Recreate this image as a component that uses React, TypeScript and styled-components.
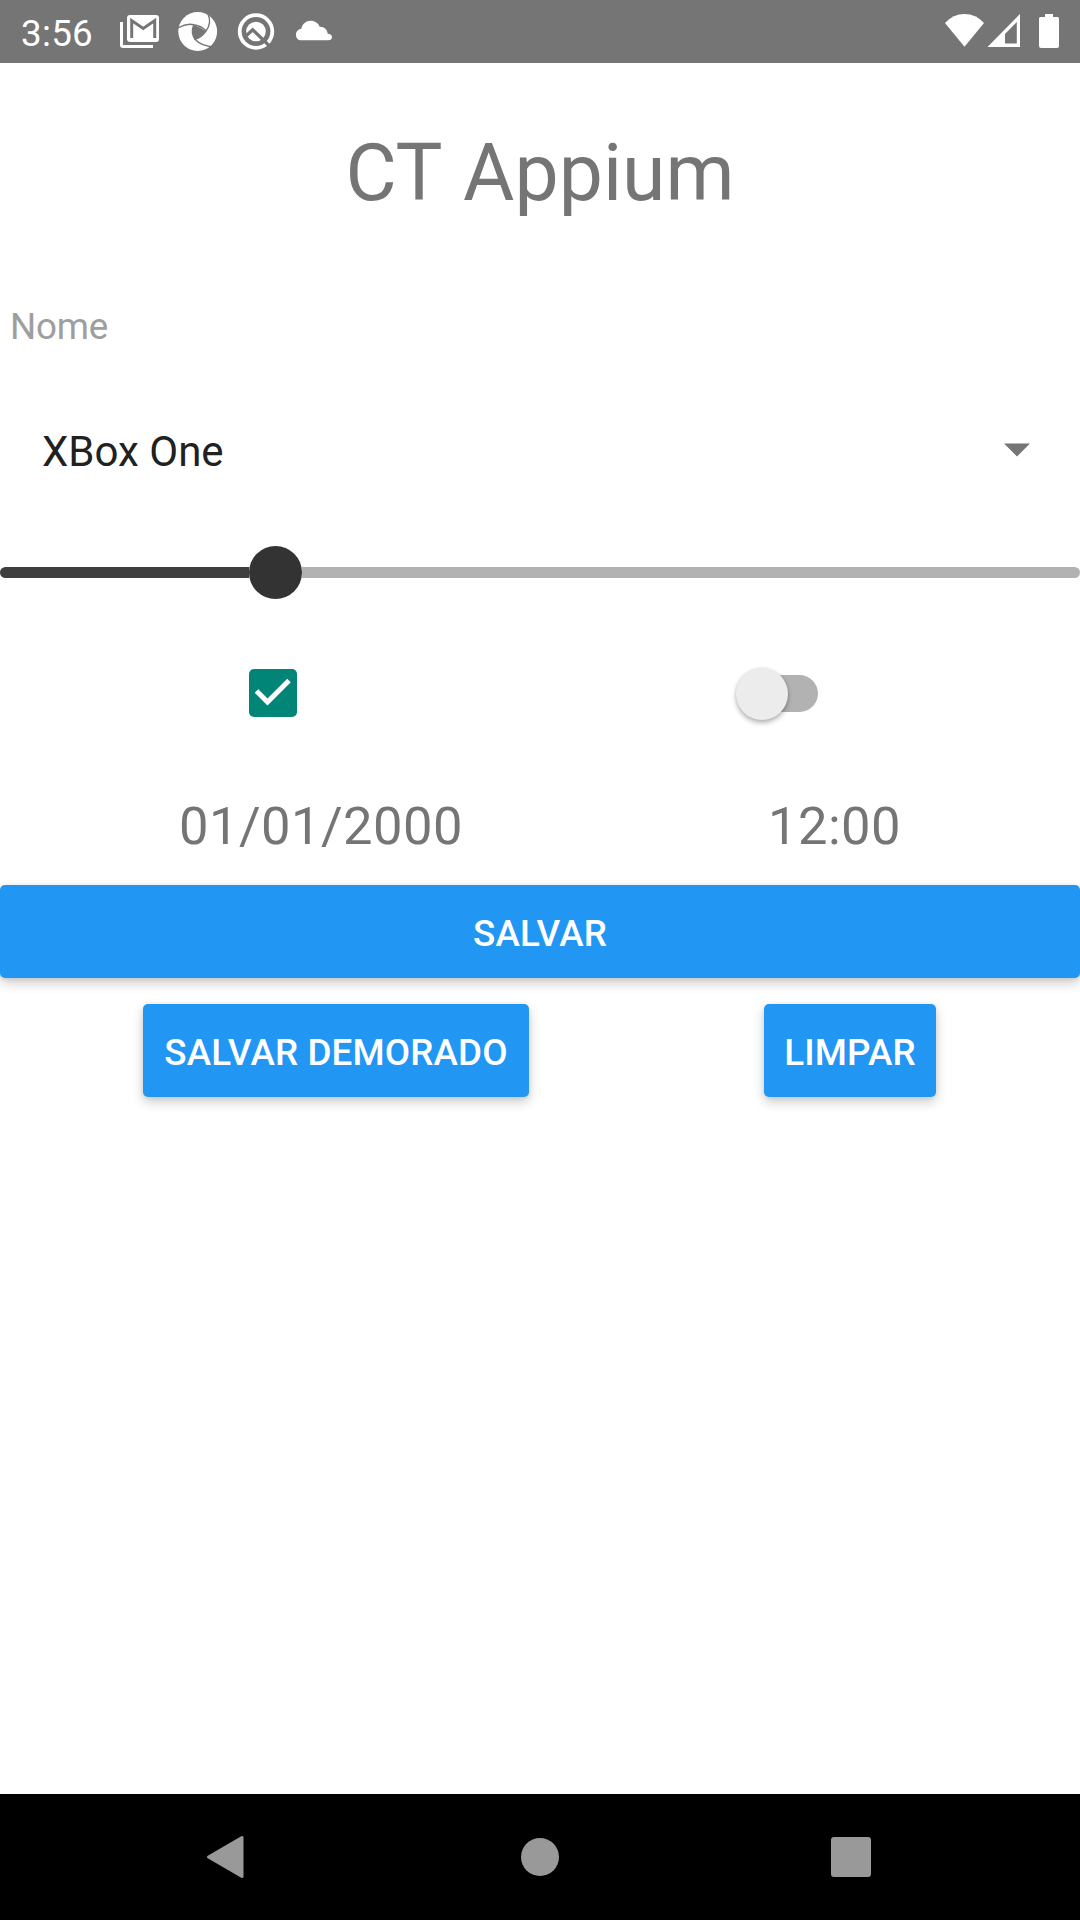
import React, { useState } from "react";
import styled, { createGlobalStyle } from "styled-components";

const GlobalStyle = createGlobalStyle`
  * { box-sizing: border-box; }
  body { margin: 0; background: #fff; font-family: Roboto, "Liberation Sans", sans-serif; }
`;

const Screen = styled.div`
  width: 1080px;
  height: 1920px;
  display: flex;
  flex-direction: column;
  background: #fff;
  overflow: hidden;
`;

const StatusBar = styled.header`
  height: 63px;
  flex: none;
  display: flex;
  align-items: flex-start;
  justify-content: space-between;
  padding: 12px 18px 0 21px;
  background: #757575;
  color: #fff;
`;

const StatusGroup = styled.div<{ $gap: number }>`
  display: flex;
  align-items: flex-start;
  gap: ${(p) => p.$gap}px;
`;

const Clock = styled.span`
  width: 79px;
  font-size: 36.75px;
  line-height: 44px;
  letter-spacing: 0.3px;
  white-space: nowrap;
`;

const Glyph = styled.svg`
  display: block;
  flex: none;
`;

const Content = styled.main`
  flex: 1;
  display: flex;
  flex-direction: column;
`;

const Title = styled.h1`
  margin: 0;
  height: 220px;
  line-height: 220px;
  font-size: 78.75px;
  font-weight: 400;
  word-spacing: 2.5px;
  text-align: center;
  color: #757575;
`;

const NameField = styled.input`
  height: 87px;
  width: 100%;
  padding: 0 10px;
  border: 0;
  outline: 0;
  background: transparent;
  font-family: inherit;
  font-size: 36.75px;
  letter-spacing: -0.2px;
  color: #212121;
  &::placeholder { color: #9e9e9e; opacity: 1; }
`;

const Picker = styled.div`
  height: 163px;
  display: flex;
  align-items: center;
  justify-content: space-between;
  padding: 0 50px 0 42px;
  font-size: 42px;
  color: #212121;
`;

const PickerArrow = styled(Glyph)`
  margin-bottom: 3px;
`;

const Slider = styled.div`
  height: 79px;
  display: flex;
  align-items: center;
`;

const Track = styled.div<{ $filled?: boolean }>`
  height: 11px;
  background: ${(p) => (p.$filled ? "#3f3f3f" : "#b2b2b2")};
  border-radius: ${(p) => (p.$filled ? "6px 0 0 6px" : "0 6px 6px 0")};
  width: ${(p) => (p.$filled ? "249px" : "auto")};
  flex: ${(p) => (p.$filled ? "none" : "1")};
`;

const SliderThumb = styled.div`
  width: 53px;
  height: 53px;
  flex: none;
  border-radius: 50%;
  background: #333;
`;

const Row = styled.div<{ $height: number; $left: number; $right: number }>`
  height: ${(p) => p.$height}px;
  display: flex;
  align-items: center;
  justify-content: space-between;
  padding: 0 ${(p) => p.$right}px 0 ${(p) => p.$left}px;
`;

const Checkbox = styled.button`
  width: 48px;
  height: 48px;
  padding: 0;
  border: 0;
  border-radius: 5px;
  background: #008577;
`;

const Switch = styled.button`
  width: 83px;
  height: 53px;
  padding: 0;
  border: 0;
  display: flex;
  align-items: center;
  background: transparent;
`;

const SwitchThumb = styled.span`
  width: 52px;
  height: 52px;
  flex: none;
  margin: 1px 0 0 1px;
  border-radius: 50%;
  background: #ececec;
  box-shadow: 0 3px 5px rgba(0, 0, 0, 0.28), 0 0 3px rgba(0, 0, 0, 0.1);
  z-index: 1;
`;

const SwitchTrack = styled.span`
  width: 56px;
  height: 37px;
  flex: none;
  margin-left: -26px;
  border-radius: 19px;
  background: #b2b2b2;
`;

const Value = styled.span`
  font-size: 52.5px;
  line-height: 62px;
  color: #757575;
  letter-spacing: 0.45px;
`;

const Button = styled.button<{ $width?: number }>`
  width: ${(p) => (p.$width ? `${p.$width}px` : "100%")};
  height: 93px;
  flex: none;
  padding: 3px 0 0;
  border: 0;
  border-radius: 5px;
  background: #2196f3;
  color: #fff;
  font-family: inherit;
  font-size: 36.75px;
  font-weight: 500;
  letter-spacing: 0.15px;
  white-space: nowrap;
  box-shadow: 0 5px 12px rgba(0, 0, 0, 0.2), 0 1px 5px rgba(0, 0, 0, 0.08);
`;

const SaveArea = styled.div`
  padding: 7px 0 26px;
`;

const NavBar = styled.nav`
  height: 126px;
  flex: none;
  display: flex;
  align-items: center;
  justify-content: space-between;
  padding: 0 209px 0 205px;
  background: #000;
`;

export default function App() {
  const [name, setName] = useState("");
  return (
    <>
      <GlobalStyle />
      <Screen>
        <StatusBar>
          <StatusGroup $gap={18}>
            <Clock>3:56</Clock>
            <Glyph width="42" height="40" viewBox="118 12 42 40">
              <path d="M121.5 22v23a1.5 1.5 0 0 0 1.5 1.5h30" fill="none" stroke="#fff" strokeWidth="3" />
              <rect x="127" y="15" width="32" height="27" rx="3" fill="#fff" />
              <path d="M131.7 38V20.5L143.2 28.5L154.7 20.5V38" fill="none" stroke="#757575" strokeWidth="3" />
            </Glyph>
            <Glyph width="40" height="40" viewBox="0 0 40 40">
              <circle cx="19.7" cy="19.5" r="19.4" fill="#fff" />
              <g fill="none" stroke="#757575" strokeWidth="1.4">
                <path d="M0 16Q8 11 16 12.7Q24 14 28 19" />
                <path d="M30 2Q34 11 28 19Q23 26 16.5 27.3" />
                <path d="M15.7 13Q12.5 21 17 27.3Q23 34 36 35" />
              </g>
              <path d="M15.7 13.2Q21 14.5 27.5 19Q23 25 16.5 27.3Q13.5 20 15.7 13.2Z" fill="#757575" />
            </Glyph>
            <Glyph width="40" height="40" viewBox="236 12 40 40">
              <circle cx="256" cy="31.5" r="16.3" fill="none" stroke="#fff" strokeWidth="3.8" />
              <circle cx="256" cy="31.5" r="9.8" fill="#fff" />
              <path d="M246.5 35.5L252.7 29.8L269.5 46" fill="none" stroke="#757575" strokeWidth="3.2" />
            </Glyph>
            <Glyph width="40" height="40" viewBox="402 36 120 120">
              <path
                d="M424 121C414 121 408 114 408 104C408 94 415 87 424 86C427 71 438 62 452 62C465 62 475 69 479 80C492 79 502 88 503 101C511 101 516 105 516 111C516 117 512 121 505 121Z"
                fill="#fff"
              />
            </Glyph>
          </StatusGroup>
          <StatusGroup $gap={2}>
            <Glyph width="41" height="40" viewBox="944 12 41 40">
              <path d="M964.5 46.8L945 23Q953 14 964.5 14T984 23Z" fill="#fff" />
            </Glyph>
            <Glyph width="34" height="40" viewBox="987 12 34 40">
              <path d="M987.5 47L1020 14V47ZM1005 34V43.5H1016.8V22Z" fill="#fff" fillRule="evenodd" />
            </Glyph>
            <Glyph width="39" height="40" viewBox="1023 12 39 40">
              <path d="M1045 14H1053V17H1057.5Q1059 17 1059 18.5V46Q1059 48 1057 48H1041Q1039 48 1039 46V18.5Q1039 17 1040.5 17H1045Z" fill="#fff" />
            </Glyph>
          </StatusGroup>
        </StatusBar>
        <Content>
          <Title>CT Appium</Title>
          <NameField placeholder="Nome" value={name} onChange={(e) => setName(e.target.value)} />
          <Picker>
            <span>XBox One</span>
            <PickerArrow width="26" height="14" viewBox="0 0 26 14">
              <path d="M0 0.5H26L13 13.5Z" fill="#757575" />
            </PickerArrow>
          </Picker>
          <Slider>
            <Track $filled />
            <SliderThumb />
            <Track />
          </Slider>
          <Row $height={162} $left={249} $right={262}>
            <Checkbox aria-label="Checkbox">
              <Glyph width="48" height="48" viewBox="0 0 48 48">
                <path d="M7.5 22L18.5 33L40 11.5" fill="none" stroke="#fff" strokeWidth="5" />
              </Glyph>
            </Checkbox>
            <Switch aria-label="Switch">
              <SwitchThumb />
              <SwitchTrack />
            </Switch>
          </Row>
          <Row $height={104} $left={179} $right={179}>
            <Value>01/01/2000</Value>
            <Value>12:00</Value>
          </Row>
          <SaveArea>
            <Button>SALVAR</Button>
          </SaveArea>
          <Row $height={93} $left={143} $right={144}>
            <Button $width={386}>SALVAR DEMORADO</Button>
            <Button $width={172}>LIMPAR</Button>
          </Row>
        </Content>
        <NavBar>
          <Glyph width="40" height="44" viewBox="205 1835 40 44">
            <path d="M208.5 1857L242 1837.5V1876.5Z" fill="#999" stroke="#999" strokeWidth="3" strokeLinejoin="round" />
          </Glyph>
          <Glyph width="44" height="40" viewBox="0 0 44 40">
            <circle cx="24" cy="20" r="19" fill="#999" />
          </Glyph>
          <Glyph width="40" height="40" viewBox="0 0 40 40">
            <rect width="40" height="40" rx="3" fill="#999" />
          </Glyph>
        </NavBar>
      </Screen>
    </>
  );
}
